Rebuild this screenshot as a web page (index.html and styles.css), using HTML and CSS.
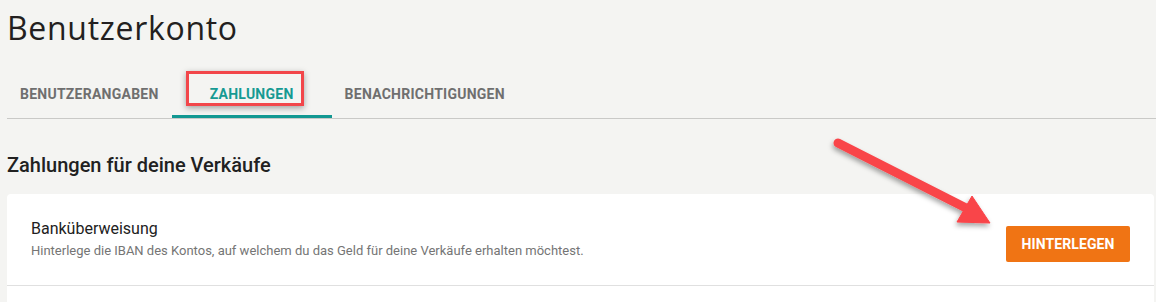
FILE: index.html
```html
<!DOCTYPE html>
<html lang="de">
<head>
<meta charset="utf-8">
<title>Benutzerkonto</title>
<link rel="stylesheet" href="styles.css">
</head>
<body>
<div class="page">
  <h1 class="title">Benutzerkonto</h1>
  <nav class="tabs">
    <a class="tab">Benutzerangaben</a>
    <a class="tab tab-active">Zahlungen</a>
    <a class="tab">Benachrichtigungen</a>
    <span class="highlight-box"></span>
  </nav>
  <h2 class="section-title">Zahlungen für deine Verkäufe</h2>
  <div class="card">
    <div class="card-row">
      <div class="row-text">
        <div class="row-title">Banküberweisung</div>
        <div class="row-desc">Hinterlege die IBAN des Kontos, auf welchem du das Geld für deine Verkäufe erhalten möchtest.</div>
      </div>
      <button class="btn">Hinterlegen</button>
    </div>
    <div class="card-row card-row-empty"></div>
  </div>
  <svg class="arrow" width="200" height="120" viewBox="0 0 200 120">
    <defs>
      <filter id="sh" x="-20%" y="-20%" width="140%" height="140%">
        <feDropShadow dx="-1" dy="3" stdDeviation="2.5" flood-color="#000" flood-opacity="0.35"/>
      </filter>
    </defs>
    <g filter="url(#sh)" fill="#f94449" stroke="#f94449">
      <line x1="18" y1="23" x2="146" y2="88" stroke-width="9" stroke-linecap="round"/>
      <polygon points="152,76 170,103 137,102" stroke-width="1" stroke-linejoin="round"/>
    </g>
  </svg>
</div>
</body>
</html>
```

FILE: styles.css
```css
html, body {
  margin: 0;
  padding: 0;
  background: #f4f4f2;
}
body {
  font-family: Roboto, "Liberation Sans", Arial, sans-serif;
  color: #212121;
  overflow: hidden;
}
.page {
  position: relative;
  box-sizing: border-box;
  padding: 8px 0 0 7px;
  height: 302px;
  overflow: hidden;
}
.title {
  margin: 0;
  font-family: "Open Sans", "Noto Sans", sans-serif;
  font-weight: 400;
  font-size: 32px;
  line-height: 40px;
  color: #231f20;
  letter-spacing: 0.7px;
}
.tabs {
  position: relative;
  margin-top: 22px;
  display: flex;
  border-bottom: 1px solid #c9c9c7;
  height: 48px;
}
.tab {
  min-width: 140px;
  padding: 0 13px;
  display: flex;
  align-items: center;
  justify-content: center;
  font-size: 14px;
  font-weight: 700;
  text-transform: uppercase;
  color: #6f6f6f;
  letter-spacing: 0.25px;
  box-sizing: border-box;
  height: 48px;
}
.tab-active {
  color: #169a93;
  min-width: 160px;
  box-shadow: inset 0 -3px 0 #129892;
}
.highlight-box {
  position: absolute;
  left: 179px;
  top: 1px;
  width: 118px;
  height: 35px;
  box-sizing: border-box;
  border: 3px solid #f2464a;
  box-shadow: 0 2px 6px rgba(0, 0, 0, 0.35);
}
.section-title {
  margin: 32px 0 15px;
  font-size: 20px;
  line-height: 28px;
  font-weight: 500;
  color: #212121;
}
.card {
  background: #fff;
  border-radius: 4px 4px 0 0;
  margin-right: 2px;
}
.card-row {
  display: flex;
  align-items: flex-end;
  justify-content: space-between;
  padding: 23px 24px 24px;
  border-bottom: 1px solid #e0e0e0;
}
.card-row-empty {
  border-bottom: 0;
  height: 20px;
  padding: 0;
}
.row-title {
  font-size: 16px;
  line-height: 24px;
  color: #212121;
}
.row-desc {
  font-size: 13px;
  line-height: 20px;
  color: #757575;
}
.btn {
  border: 0;
  border-radius: 2px;
  background: #f07414;
  color: #fff;
  font-family: Roboto, "Liberation Sans", sans-serif;
  font-size: 14px;
  font-weight: 700;
  text-transform: uppercase;
  width: 124px;
  height: 36px;
  margin-bottom: -1px;
  letter-spacing: 0.1px;
}
.arrow {
  position: absolute;
  left: 820px;
  top: 120px;
}
```
